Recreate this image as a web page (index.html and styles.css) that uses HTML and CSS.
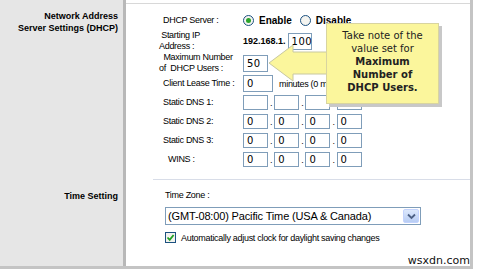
FILE: index.html
```html
<!DOCTYPE html>
<html lang="en">
<head>
  <meta charset="UTF-8">
  <title>Basic Setup</title>
  <link rel="stylesheet" href="styles.css">
</head>
<body>
  <div class="page">
    <div class="frame">
      <div class="side">
        <div class="side-block dhcp-title">Network Address<br>Server Settings (DHCP)</div>
        <div class="side-block">Time Setting</div>
      </div>
      <div class="main">
        <div class="section dhcp">
          <div class="row r-server">
            <span class="label">DHCP Server :</span>
            <span class="value">
              <span class="radio on"></span><b>Enable</b>
              <span class="radio"></span><b>Disable</b>
            </span>
          </div>
          <div class="row r-start">
            <span class="label two">&nbsp;Starting IP<br>Address :</span>
            <span class="value"><b class="prefix">192.168.1.</b><span class="box w22">100</span></span>
          </div>
          <div class="row r-max">
            <span class="label two">&nbsp; Maximum Number<br>of&nbsp; DHCP Users :</span>
            <span class="value"><span class="box w23">50</span></span>
          </div>
          <div class="row r-lease">
            <span class="label">Client Lease Time :</span>
            <span class="value"><span class="box w28">0</span><span class="unit">minutes (0 means one day)</span></span>
          </div>
          <div class="row r-dns">
            <span class="label">Static DNS 1:</span>
            <span class="value ip">
              <span class="box"></span>.<span class="box"></span>.<span class="box"></span>.<span class="box"></span>
            </span>
          </div>
          <div class="row r-dns">
            <span class="label">Static DNS 2:</span>
            <span class="value ip">
              <span class="box">0</span>.<span class="box">0</span>.<span class="box">0</span>.<span class="box">0</span>
            </span>
          </div>
          <div class="row r-dns">
            <span class="label">Static DNS 3:</span>
            <span class="value ip">
              <span class="box">0</span>.<span class="box">0</span>.<span class="box">0</span>.<span class="box">0</span>
            </span>
          </div>
          <div class="row r-dns">
            <span class="label indent">WINS :</span>
            <span class="value ip">
              <span class="box">0</span>.<span class="box">0</span>.<span class="box">0</span>.<span class="box">0</span>
            </span>
          </div>
        </div>
        <div class="section time">
          <div class="tz-label">Time Zone :</div>
          <div class="select">
            <span class="select-text">(GMT-08:00) Pacific Time (USA &amp; Canada)</span>
            <span class="select-btn">
              <svg width="9" height="7" viewBox="0 0 9 7"><path d="M1 1.5 L4.5 5 L8 1.5" fill="none" stroke="#4d6185" stroke-width="1.8"/></svg>
            </span>
          </div>
          <div class="check-row">
            <span class="check">
              <svg width="9" height="9" viewBox="0 0 9 9"><path d="M1.5 4.5 L3.7 6.8 L7.6 2" fill="none" stroke="#21a121" stroke-width="1.8"/></svg>
            </span>
            <span>Automatically adjust clock for daylight saving changes</span>
          </div>
        </div>
      </div>
    </div>

    <!-- callout over the form -->
    <svg class="arrow" width="62" height="44" viewBox="0 0 62 44">
      <path d="M1 20 L25 2 L25 9 L61 9 L61 31 L25 31 L25 38 Z" fill="#fbf69c" stroke="#c8c8a0" stroke-width="1"/>
    </svg>
    <div class="callout">
      Take note of the<br>value set for<br><b>Maximum<br>Number of<br>DHCP Users.</b>
    </div>

    <div class="mark">wsxdn.com</div>
  </div>
</body>
</html>
```

FILE: styles.css
```css
/* Router setup page */
body {
  margin: 0;
  font-family: "Liberation Sans", Arial, sans-serif;
  font-size: 9px;
  letter-spacing: -0.3px;
  color: #000;
}
.page {
  position: relative;
  width: 480px;
  height: 272px;
  background: #fff;
  overflow: hidden;
}
.frame {
  display: flex;
  width: 473px;
  height: 269px;
  border-right: 3px solid #c4c4c4;
  border-bottom: 3px solid #c4c4c4;
  box-sizing: border-box;
}
.side {
  width: 118px;
  flex: none;
  background: #e6e6e6;
  border-right: 3px solid #b8b8b8;
  text-align: right;
  font-weight: bold;
  letter-spacing: 0;
  padding: 10px 5px 0 0;
}
.side-block {
  line-height: 12px;
}
.dhcp-title {
  height: 180px;
}
.main {
  flex: 1;
  border-top: 1px solid #d8d8d8;
  margin-top: 3px;
}
.section.dhcp {
  height: 168px;
  margin-left: 27px;
  padding: 7px 0 0 10px;
  border-bottom: 1px solid #d8dde8;
}
.row {
  display: flex;
  align-items: center;
  height: 19px;
}
.r-start { height: 22px; }
.r-max { height: 22px; }
.label {
  width: 80px;
  flex: none;
  line-height: 11px;
  white-space: nowrap;
}
.label.two {
  margin-left: -4px;
  width: 84px;
}
.label.indent {
  padding-left: 5px;
  box-sizing: border-box;
}
.value {
  display: flex;
  align-items: center;
}
.value b {
  font-size: 10px;
  letter-spacing: 0;
  margin-right: 8px;
}
.radio {
  width: 9px;
  height: 9px;
  border: 1px solid #1c5180;
  border-radius: 50%;
  background: #f4f4f0;
  margin-right: 5px;
  position: relative;
}
.radio.on::after {
  content: "";
  position: absolute;
  left: 2px;
  top: 2px;
  width: 5px;
  height: 5px;
  border-radius: 50%;
  background: #2ba52b;
}
.value b.prefix {
  font-size: 9px;
  margin-right: 2px;
}
.box {
  display: inline-block;
  width: 20px;
  height: 15px;
  border: 1px solid #7f9db9;
  background: #fff;
  font-family: Verdana, "DejaVu Sans", sans-serif;
  font-size: 10px;
  line-height: 15px;
  padding-left: 3px;
  letter-spacing: 0.5px;
}
.box.w22 { width: 19px; }
.box.w23 { width: 20px; }
.box.w28 { width: 25px; }
.ip .box {
  width: 20px;
  height: 13px;
  line-height: 13px;
  margin: 0 2px;
}
.ip .box:first-child {
  margin-left: 0;
}
.unit {
  margin-left: 6px;
  white-space: nowrap;
}
.section.time {
  padding: 10px 0 0 39px;
}
.tz-label {
  height: 17px;
}
.select {
  display: flex;
  width: 254px;
  height: 16px;
  border: 1px solid #7f9db9;
  align-items: center;
  font-size: 11px;
  letter-spacing: -0.15px;
}
.select-text {
  flex: 1;
  padding-left: 2px;
}
.select-btn {
  width: 16px;
  height: 14px;
  margin-right: 1px;
  background: linear-gradient(#dce8fc, #b8cdf4);
  border: 1px solid #c3d3fd;
  border-radius: 2px;
  display: flex;
  align-items: center;
  justify-content: center;
  box-sizing: border-box;
}
.check-row {
  display: flex;
  align-items: center;
  margin-top: 7px;
}
.check {
  width: 9px;
  height: 9px;
  border: 1px solid #1c5180;
  background: #f2f2ee;
  margin-right: 5px;
  display: flex;
}
.arrow {
  position: absolute;
  left: 268px;
  top: 43px;
}
.callout {
  position: absolute;
  left: 326px;
  top: 23px;
  width: 113px;
  height: 81px;
  box-sizing: border-box;
  padding-top: 5px;
  background: #fbf69c;
  border: 1px solid #d8d4a0;
  box-shadow: 3px 3px 0 #c8c8c8;
  text-align: center;
  font-family: Verdana, "DejaVu Sans", sans-serif;
  font-size: 10px;
  line-height: 13px;
  letter-spacing: 0;
  color: #222;
}
.mark {
  position: absolute;
  right: 10px;
  bottom: 5px;
  font-family: "DejaVu Sans", sans-serif;
  font-size: 11px;
  letter-spacing: 0;
  color: #111;
}
```
